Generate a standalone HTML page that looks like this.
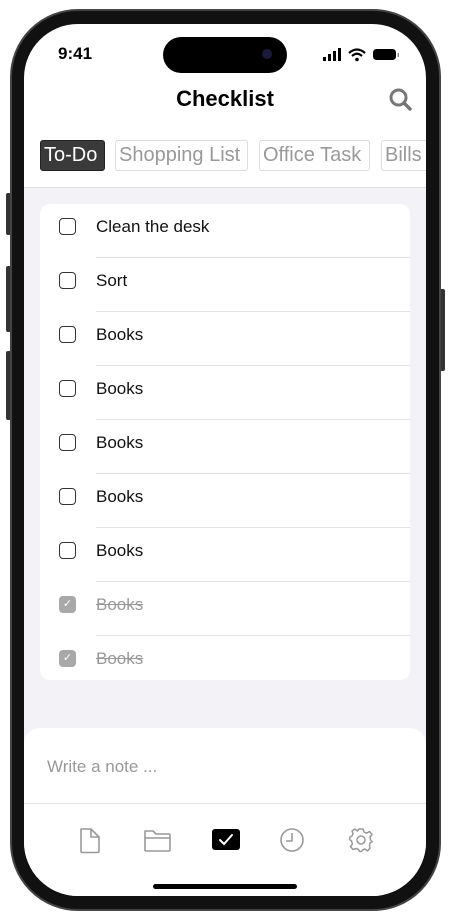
<!DOCTYPE html>
<html><head><meta charset="utf-8"><style>
*{margin:0;padding:0;box-sizing:border-box}
body{width:450px;height:920px;background:#fff;position:relative;overflow:hidden;font-family:"Liberation Sans",Arial,sans-serif}
.abs{position:absolute}
.bezel{left:10px;top:9px;width:431px;height:902px;border-radius:68px;background:#111;border:2px solid #444}
.screen{left:24px;top:24px;width:402px;height:872px;border-radius:54px;background:#fff;overflow:hidden}
.btn{background:#333;border-radius:2px}
.tab{top:116px;height:31px;border:1px solid #ddd;border-radius:3px;color:#999;font-size:20px;line-height:29px;padding:0 3px;white-space:nowrap;overflow:hidden}
.row{position:absolute;left:0;width:370px;height:54px}
.row .cb{position:absolute;left:19px;top:14px;width:17px;height:17px;border:1.5px solid #333;border-radius:4px}
.row .t{position:absolute;left:56px;top:13px;font-size:17px;color:#111}
.row .ln{position:absolute;left:56px;right:0;bottom:0;height:1px;background:#e3e3e6}
.row.done .cb{background:#a8a8a8;border-color:#a8a8a8;color:#fff;font-size:11px;line-height:14px;text-align:center}
.row.done .t{color:#999;text-decoration:line-through}
</style></head><body>
<div class="abs btn" style="left:6px;top:193px;width:5px;height:42px"></div>
<div class="abs btn" style="left:6px;top:266px;width:5px;height:66px"></div>
<div class="abs btn" style="left:6px;top:351px;width:5px;height:69px"></div>
<div class="abs btn" style="left:440px;top:289px;width:5px;height:82px"></div>
<div class="abs bezel"></div>
<div class="abs screen">
 <div class="abs" style="left:34px;top:20px;font-size:17px;font-weight:bold;color:#000">9:41</div>
 <div class="abs" style="left:139px;top:13px;width:124px;height:36px;border-radius:18px;background:#000"></div>
 <div class="abs" style="left:238px;top:25px;width:10px;height:10px;border-radius:5px;background:#1a1a3a"></div>
 <svg class="abs" style="left:299px;top:23px" width="80" height="16" viewBox="0 0 80 16">
  <rect x="0" y="10" width="3" height="4" fill="#000"/><rect x="5" y="7" width="3" height="7" fill="#000"/><rect x="10" y="4" width="3" height="10" fill="#000"/><rect x="15" y="1" width="3" height="13" fill="#000"/>
  <path d="M26 6 Q34 -1 42 6" stroke="#000" stroke-width="2.2" fill="none"/><path d="M29 9 Q34 4.5 39 9" stroke="#000" stroke-width="2.2" fill="none"/><circle cx="34" cy="12.5" r="1.8" fill="#000"/>
  <rect x="50" y="2" width="23" height="11" rx="3.5" fill="#000"/><rect x="74.5" y="6" width="1.5" height="4" fill="#888"/>
 </svg>
 <div class="abs" style="left:0;width:402px;top:62px;text-align:center;font-size:22px;font-weight:bold;color:#000">Checklist</div>
 <svg class="abs" style="left:364px;top:63px" width="26" height="26" viewBox="0 0 26 26"><circle cx="10.5" cy="10.5" r="7.5" stroke="#777" stroke-width="3" fill="none"/><path d="M16 16 L22 22" stroke="#777" stroke-width="3.5" stroke-linecap="round"/></svg>
 <div class="abs tab" style="left:16px;width:65px;background:#3a3a3a;border-color:#222;color:#fff">To-Do</div>
 <div class="abs tab" style="left:91px;width:133px">Shopping List</div>
 <div class="abs tab" style="left:235px;width:111px">Office Task</div>
 <div class="abs tab" style="left:357px;width:60px">Bills</div>
 <div class="abs" style="left:0;top:163px;width:402px;height:1px;background:#ddd"></div>
 <div class="abs" style="left:0;top:164px;width:402px;height:600px;background:#f2f2f7"></div>
 <div class="abs" style="left:16px;top:180px;width:370px;height:476px;background:#fff;border-radius:10px">
  <div class="row" style="top:0"><div class="cb"></div><div class="t">Clean the desk</div><div class="ln"></div></div>
  <div class="row" style="top:54px"><div class="cb"></div><div class="t">Sort</div><div class="ln"></div></div>
  <div class="row" style="top:108px"><div class="cb"></div><div class="t">Books</div><div class="ln"></div></div>
  <div class="row" style="top:162px"><div class="cb"></div><div class="t">Books</div><div class="ln"></div></div>
  <div class="row" style="top:216px"><div class="cb"></div><div class="t">Books</div><div class="ln"></div></div>
  <div class="row" style="top:270px"><div class="cb"></div><div class="t">Books</div><div class="ln"></div></div>
  <div class="row" style="top:324px"><div class="cb"></div><div class="t">Books</div><div class="ln"></div></div>
  <div class="row done" style="top:378px"><div class="cb">✓</div><div class="t">Books</div><div class="ln"></div></div>
  <div class="row done" style="top:432px"><div class="cb">✓</div><div class="t">Books</div></div>
 </div>
 <div class="abs" style="left:0;top:704px;width:402px;height:200px;background:#fff;border-radius:16px 16px 0 0"></div>
 <div class="abs" style="left:23px;top:733px;font-size:17px;color:#999">Write a note ...</div>
 <div class="abs" style="left:0;top:779px;width:402px;height:1px;background:#e3e3e3"></div>
 <svg class="abs" style="left:0;top:800px" width="402" height="32" viewBox="0 0 402 32">
  <g fill="none" stroke="#999" stroke-width="1.6" stroke-linejoin="round">
   <path d="M57 5 H67 L75 13 V27 Q75 28.5 73.5 28.5 H58.5 Q57 28.5 57 27 Z M67 5 V13 H75"/>
   <path d="M121 7 H129 L132 10 H145 Q146 10 146 11 V26 Q146 27 145 27 H122 Q121 27 121 26 Z M121 14 H146"/>
   <circle cx="268" cy="16" r="11"/><path d="M268 9 V17 H262"/>
  </g>
  <rect x="188" y="5" width="28" height="21" rx="3" fill="#000"/>
  <path d="M196 16 L200 20 L208 11" stroke="#fff" stroke-width="2" fill="none" stroke-linecap="round"/>
  <g transform="translate(337 16)" fill="none" stroke="#999" stroke-width="1.5">
   <circle r="4"/>
   <path d="M-2 -11 H2 L3 -8 L5.5 -6.8 L8.5 -8.5 L11 -5.5 L9 -3 L9.5 0 L11 1.5 L11 2 L9 3 L8.5 5.5 L9 8 L6.5 11 L4 9 L1.5 10 L0.5 11.5 L-1.5 11.5 L-2.5 9.5 L-5 8.5 L-8 9.5 L-10.5 6.5 L-8.5 4 L-9.5 1 L-11.5 -0.5 L-11 -3 L-9 -4 L-8 -6.5 L-9 -9 L-6 -11 L-3.5 -9 Z" stroke-linejoin="round"/>
  </g>
 </svg>
 <div class="abs" style="left:129px;top:860px;width:144px;height:5px;border-radius:3px;background:#000"></div>
</div>
</body></html>
